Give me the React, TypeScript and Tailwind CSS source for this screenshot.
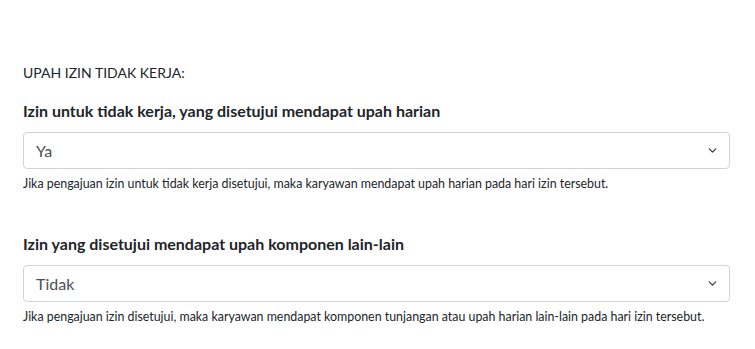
import React from 'react';
import { ChevronDown } from 'lucide-react';

const fields = [
  {
    label: 'Izin untuk tidak kerja, yang disetujui mendapat upah harian',
    value: 'Ya',
    help: 'Jika pengajuan izin untuk tidak kerja disetujui, maka karyawan mendapat upah harian pada hari izin tersebut.',
  },
  {
    label: 'Izin yang disetujui mendapat upah komponen lain-lain',
    value: 'Tidak',
    help: 'Jika pengajuan izin disetujui, maka karyawan mendapat komponen tunjangan atau upah harian lain-lain pada hari izin tersebut.',
  },
];

function App() {
  return (
    <div className="w-[755px] h-[349px] overflow-hidden bg-white text-[#212529] font-['Lato',sans-serif] pl-[23px] pr-[25px] pt-[63px]">
      <div className="text-[14px] leading-[20px]">UPAH IZIN TIDAK KERJA:</div>

      {fields.map((f, i) => (
        <div key={i} className={i === 0 ? 'mt-[18px]' : 'mt-[42px]'}>
          {/* Label */}
          <div className="text-[16px] leading-[20px] font-bold">{f.label}</div>

          {/* Select */}
          <div className="mt-[11px] h-[37px] flex items-center justify-between border border-[#ced4da] rounded-[4px] pl-[12px] pr-[10px] text-[16px] text-[#495057]">
            <span>{f.value}</span>
            <ChevronDown size={13} strokeWidth={2.2} className="text-[#343a40]" />
          </div>

          {/* Help */}
          <div className="mt-[7px] text-[12.4px] leading-[16px]">{f.help}</div>
        </div>
      ))}
    </div>
  );
}

export default App;
